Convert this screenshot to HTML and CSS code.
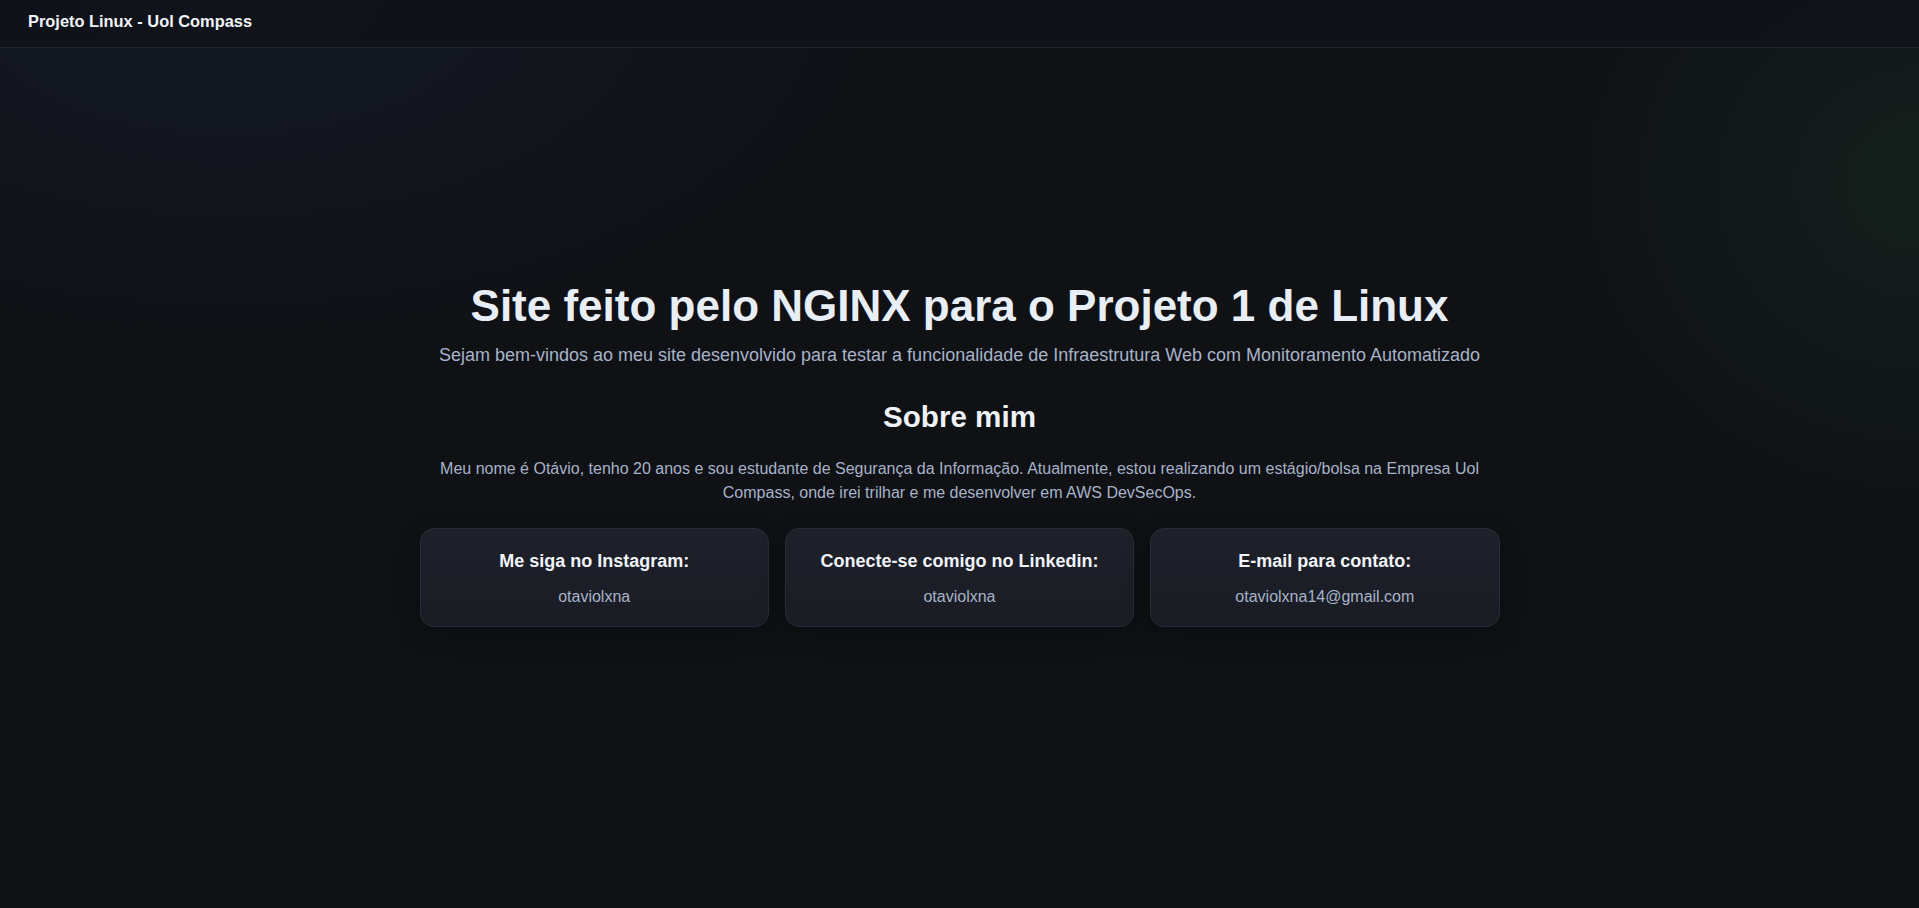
FILE: index.html
```html
<!DOCTYPE html>
<html lang="pt-BR">
<head>
<meta charset="utf-8">
<title>Projeto Linux - Uol Compass</title>
<link rel="stylesheet" href="styles.css">
</head>
<body>
<header class="topbar">
  <span class="brand">Projeto Linux - Uol Compass</span>
</header>
<main class="content">
  <h1 class="title">Site feito pelo NGINX para o Projeto 1 de Linux</h1>
  <p class="subtitle">Sejam bem-vindos ao meu site desenvolvido para testar a funcionalidade de Infraestrutura Web com Monitoramento Automatizado</p>
  <h2 class="section-title">Sobre mim</h2>
  <p class="about">Meu nome é Otávio, tenho 20 anos e sou estudante de Segurança da Informação. Atualmente, estou realizando um estágio/bolsa na Empresa Uol Compass, onde irei trilhar e me desenvolver em AWS DevSecOps.</p>
  <div class="cards">
    <div class="card">
      <h3 class="card-title">Me siga no Instagram:</h3>
      <p class="card-value">otaviolxna</p>
    </div>
    <div class="card">
      <h3 class="card-title">Conecte-se comigo no Linkedin:</h3>
      <p class="card-value">otaviolxna</p>
    </div>
    <div class="card">
      <h3 class="card-title">E-mail para contato:</h3>
      <p class="card-value">otaviolxna14@gmail.com</p>
    </div>
  </div>
</main>
</body>
</html>
```
FILE: styles.css
```css
* { box-sizing: border-box; }

html, body {
  margin: 0;
  padding: 0;
}

body {
  min-height: 100vh;
  font-family: "Liberation Sans", Arial, sans-serif;
  color: #e6edf3;
  background:
    radial-gradient(1000px 520px at 12% 0%, rgba(60, 90, 160, 0.11), rgba(60, 90, 160, 0) 70%),
    radial-gradient(560px 520px at 100% 20%, rgba(50, 120, 70, 0.14), rgba(50, 120, 70, 0) 70%),
    #0f1115;
}

.topbar {
  height: 48px;
  padding: 12px 28px 0;
  background: rgba(17, 19, 25, 0.96);
  border-bottom: 1px solid #1f2532;
}

.brand {
  font-size: 16.4px;
  font-weight: 700;
  line-height: 18px;
  color: #f0f3f8;
  display: block;
}

.content {
  width: 1080px;
  margin: 0 auto;
  padding-top: 231.5px;
  display: flex;
  flex-direction: column;
  align-items: center;
  text-align: center;
}

.title {
  margin: 0;
  font-size: 44px;
  line-height: 1.2;
  font-weight: 700;
  color: #e8eef6;
}

.subtitle {
  margin: 10px 0 0;
  font-size: 18px;
  line-height: 1.5;
  color: #a7b3c9;
}

.section-title {
  margin: 30px 0 0;
  font-size: 29.6px;
  line-height: 1.2;
  font-weight: 700;
  color: #eef2f8;
}

.about {
  margin: 22px 0 0;
  font-size: 16px;
  line-height: 1.5;
  color: #a7b3c9;
}

.cards {
  margin-top: 23.5px;
  width: 100%;
  display: grid;
  grid-template-columns: repeat(3, 1fr);
  gap: 16px;
}

.card {
  height: 99px;
  padding: 22px 20px 0;
  border: 1px solid #272c38;
  border-radius: 14px;
  background: linear-gradient(180deg, #1e212a 0%, #191c23 100%);
  box-shadow: 0 8px 24px rgba(0, 0, 0, 0.25);
}

.card-title {
  margin: 0 0 12px;
  font-size: 18px;
  line-height: 1.2;
  font-weight: 700;
  color: #f0f4fa;
}

.card-value {
  margin: 0;
  font-size: 16px;
  line-height: 1.5;
  color: #a7b3c9;
}
```
